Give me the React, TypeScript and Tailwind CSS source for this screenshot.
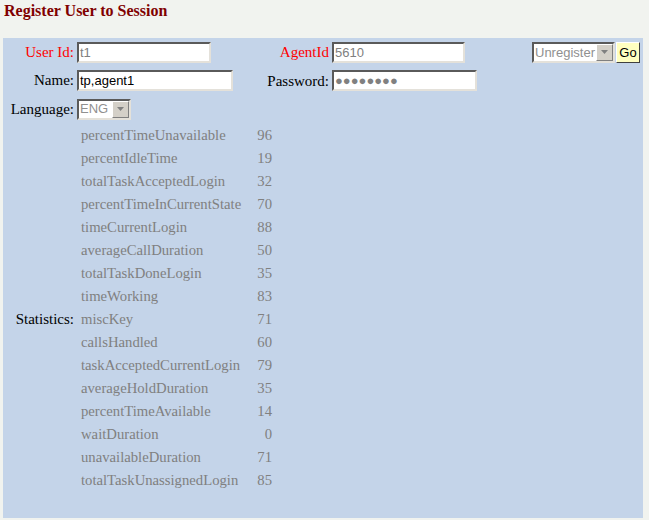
import React from "react";

const stats: [string, string][] = [
  ["percentTimeUnavailable", "96"],
  ["percentIdleTime", "19"],
  ["totalTaskAcceptedLogin", "32"],
  ["percentTimeInCurrentState", "70"],
  ["timeCurrentLogin", "88"],
  ["averageCallDuration", "50"],
  ["totalTaskDoneLogin", "35"],
  ["timeWorking", "83"],
  ["miscKey", "71"],
  ["callsHandled", "60"],
  ["taskAcceptedCurrentLogin", "79"],
  ["averageHoldDuration", "35"],
  ["percentTimeAvailable", "14"],
  ["waitDuration", "0"],
  ["unavailableDuration", "71"],
  ["totalTaskUnassignedLogin", "85"],
];

const inputCls =
  "h-[21px] border-2 border-t-[#5a5a5a] border-l-[#5a5a5a] border-b-[#e4e1da] border-r-[#e4e1da] bg-white px-[1px] flex items-center text-[13px] leading-none font-['Liberation_Sans',Arial,sans-serif]";

function Arrow() {
  return (
    <div className="w-[17px] h-[17px] bg-[#d4d0c8] border border-t-white border-l-white border-b-[#808080] border-r-[#808080] flex items-center justify-center">
      <svg width="7" height="4" viewBox="0 0 7 4">
        <path d="M0 0 H7 L3.5 4 Z" fill="#808080" />
      </svg>
    </div>
  );
}

export default function App() {
  return (
    <div className="w-[649px] h-[520px] bg-[#f1f3ef] font-['Liberation_Serif','Times_New_Roman',serif] text-[15px] text-black overflow-hidden">
      <div className="h-[38px] pl-[4px] pt-[1px]">
        <h1 className="text-[16px] font-bold text-[#800000] leading-[20px]">Register User to Session</h1>
      </div>
      <div className="ml-[3px] w-[640px] h-[480px] bg-[#c4d4e9] pt-[3px]">
        <div className="grid grid-cols-[74px_178px_77px_200px_1fr] gap-y-[6px]">
          {/* row 1 */}
          <div className="flex items-center justify-end pr-[3px] h-[22px] text-[#ff0000]">User Id:</div>
          <div className="flex items-center">
            <div className={inputCls + " w-[134px] text-[#808080]"}>t1</div>
          </div>
          <div className="flex items-center justify-end pr-[3px] text-[#ff0000]">AgentId</div>
          <div className="flex items-center">
            <div className={inputCls + " w-[133px] text-[#808080]"}>5610</div>
          </div>
          <div className="flex items-center justify-end pr-[3px] gap-[1px]">
            <div className="h-[21px] w-[83px] border-2 border-t-[#5a5a5a] border-l-[#5a5a5a] border-b-[#e4e1da] border-r-[#e4e1da] bg-white flex items-center justify-between font-['Liberation_Sans',Arial,sans-serif] text-[13px] text-[#909090] pl-[1px]">
              <span>Unregister</span>
              <Arrow />
            </div>
            <div className="h-[21px] w-[24px] bg-[#ffffc0] border border-t-white border-l-white border-b-[#404040] border-r-[#404040] flex items-center justify-center font-['Liberation_Sans',Arial,sans-serif] text-[13px] text-black">
              Go
            </div>
          </div>
          {/* row 2 */}
          <div className="flex items-center justify-end pr-[3px] h-[22px]">Name:</div>
          <div className="flex items-center">
            <div className={inputCls + " w-[156px] text-black"}>tp,agent1</div>
          </div>
          <div className="flex items-center justify-end pr-[3px]">Password:</div>
          <div className="flex items-center">
            <div className={inputCls + " w-[145px] text-[#808080] tracking-[0px] text-[13px]"}>●●●●●●●●</div>
          </div>
          <div />
          {/* row 3 */}
          <div className="flex items-center justify-end pr-[3px] h-[22px]">Language:</div>
          <div className="flex items-center">
            <div className="h-[21px] w-[54px] border-2 border-t-[#5a5a5a] border-l-[#5a5a5a] border-b-[#e4e1da] border-r-[#e4e1da] bg-white flex items-center justify-between font-['Liberation_Sans',Arial,sans-serif] text-[13px] text-[#909090] pl-[1px]">
              <span>ENG</span>
              <Arrow />
            </div>
          </div>
          <div />
          <div />
          <div />
        </div>
        <div className="flex mt-[4px]">
          <div className="w-[74px] h-[391px] flex items-center justify-end pr-[3px]">Statistics:</div>
          <div className="pl-[4px] text-[14.7px]">
            {stats.map(([k, v]) => (
              <div key={k} className="h-[23px] flex items-center text-[#808080]">
                <span className="w-[168px]">{k}</span>
                <span className="w-[23px] text-right">{v}</span>
              </div>
            ))}
          </div>
        </div>
      </div>
    </div>
  );
}
